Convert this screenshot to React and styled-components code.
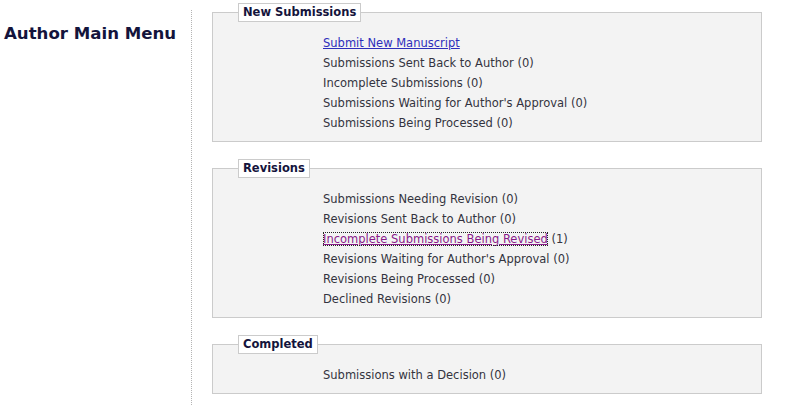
import React from 'react';
import styled, { createGlobalStyle } from 'styled-components';

const GlobalStyle = createGlobalStyle`
  body {
    margin: 0;
    background: #fff;
    font-family: 'DejaVu Sans', Verdana, sans-serif;
  }
`;

const Page = styled.div`
  display: flex;
  min-height: 405px;
`;

const Sidebar = styled.div`
  width: 187px;
  padding-left: 4px;
`;

const Title = styled.h1`
  margin: 24px 0 0;
  font-size: 16.6px;
  line-height: 20px;
  font-weight: bold;
  color: #14143c;
  white-space: nowrap;
`;

const Divider = styled.div`
  margin-top: 10px;
  border-left: 1px dotted #b4b4b4;
`;

const Main = styled.div`
  padding-left: 20px;
  padding-top: 3px;
`;

const Box = styled.fieldset`
  width: 550px;
  box-sizing: border-box;
  margin: 0 0 17px;
  padding: 10px 0 9px 110px;
  background: #f3f3f3;
  border: 1px solid #cbcbcb;
`;

const Legend = styled.legend`
  margin-left: -85px;
  padding: 0 4px;
  height: 19px;
  box-sizing: border-box;
  line-height: 17px;
  background: #fff;
  border: 1px solid #cbcbcb;
  font-size: 11.5px;
  font-weight: bold;
  color: #14143c;
`;

const List = styled.ul`
  list-style: none;
  margin: 0;
  padding: 0;
`;

const Item = styled.li`
  font-size: 11.5px;
  line-height: 20px;
  padding-top: 1px;
  margin-bottom: -1px;
  color: #333340;
  white-space: nowrap;
`;

const Link = styled.a`
  color: ${(p) => (p.$visited ? '#8a1a8a' : '#2e2ebb')};
  text-decoration: underline;
  outline: ${(p) => (p.$focused ? '1px dotted #222' : 'none')};
  outline-offset: -1px;
`;

const sections = [
  {
    title: 'New Submissions',
    items: [
      { link: 'Submit New Manuscript' },
      { text: 'Submissions Sent Back to Author (0)' },
      { text: 'Incomplete Submissions (0)' },
      { text: "Submissions Waiting for Author's Approval (0)" },
      { text: 'Submissions Being Processed (0)' },
    ],
  },
  {
    title: 'Revisions',
    items: [
      { text: 'Submissions Needing Revision (0)' },
      { text: 'Revisions Sent Back to Author (0)' },
      { link: 'Incomplete Submissions Being Revised', after: ' (1)', visited: true },
      { text: "Revisions Waiting for Author's Approval (0)" },
      { text: 'Revisions Being Processed (0)' },
      { text: 'Declined Revisions (0)' },
    ],
  },
  {
    title: 'Completed',
    items: [{ text: 'Submissions with a Decision (0)' }],
  },
];

const App = () => {
  return (
    <>
      <GlobalStyle />
      <Page>
        <Sidebar>
          <Title>Author Main Menu</Title>
        </Sidebar>
        <Divider />
        <Main>
          {sections.map((s) => (
            <Box key={s.title}>
              <Legend>{s.title}</Legend>
              <List>
                {s.items.map((it, i) => (
                  <Item key={i}>
                    {it.link ? (
                      <>
                        <Link href="#" $visited={it.visited} $focused={it.visited}>
                          {it.link}
                        </Link>
                        {it.after}
                      </>
                    ) : (
                      it.text
                    )}
                  </Item>
                ))}
              </List>
            </Box>
          ))}
        </Main>
      </Page>
    </>
  );
};

export default App;
